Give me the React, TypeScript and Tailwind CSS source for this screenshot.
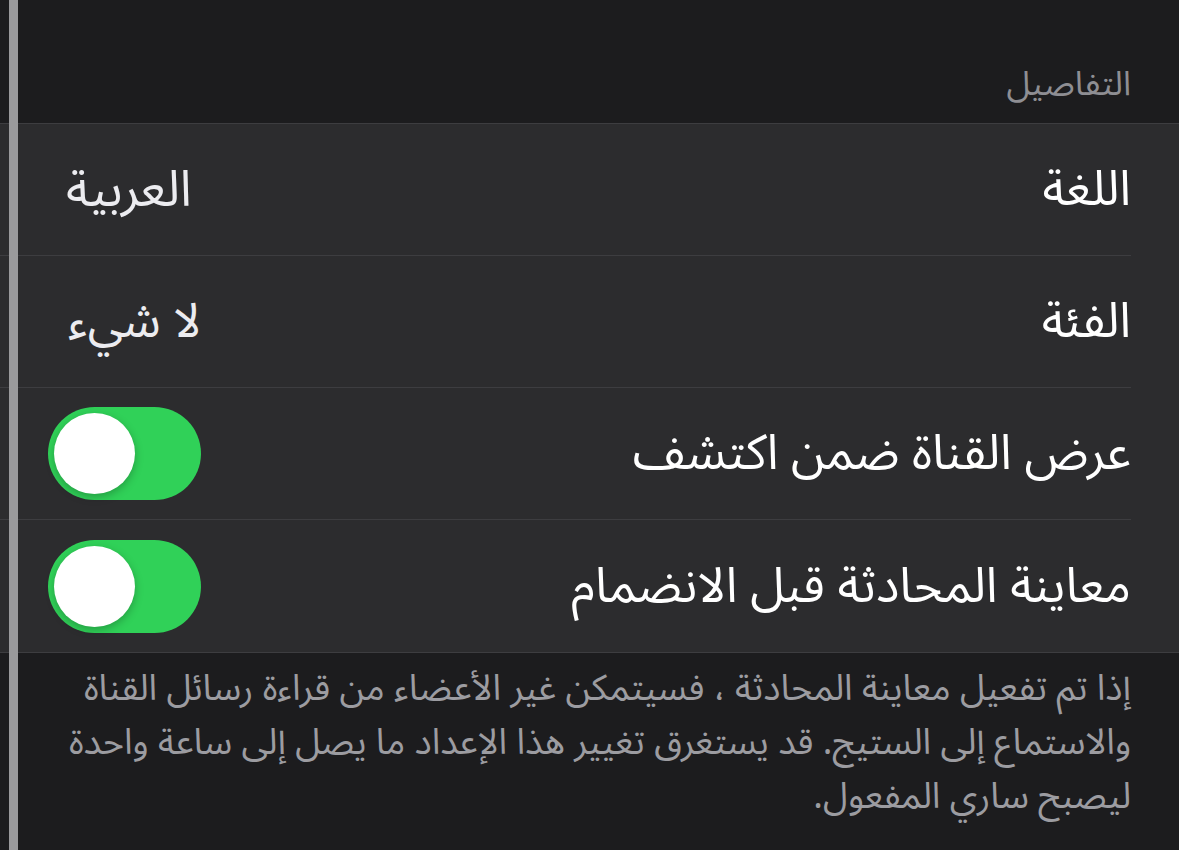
import { useState } from "react";

const font = { fontFamily: '"Noto Sans Arabic", "DejaVu Sans", "Noto Sans", sans-serif' };

function Toggle({ on, onChange }: { on: boolean; onChange: () => void }) {
  return (
    <button
      onClick={onChange}
      className={`relative w-[153px] h-[93px] rounded-full shrink-0 ${on ? "bg-[#30d158]" : "bg-[#39393d]"}`}
    >
      <span
        className={`absolute top-[6px] w-[81px] h-[81px] rounded-full bg-white shadow-[0_3px_8px_rgba(0,0,0,0.25)] ${on ? "left-[6px]" : "right-[6px]"}`}
      />
    </button>
  );
}

function Row({ label, children, last }: { label: string; children: React.ReactNode; last?: boolean }) {
  return (
    <div className="pr-[48px]">
      <div className={`h-[132px] flex items-center justify-between pl-[48px] ${last ? "" : "border-b border-[#3d3d40]"}`}>
        <span className="text-[49px] text-white leading-none">{label}</span>
        {children}
      </div>
    </div>
  );
}

export default function App() {
  const [discover, setDiscover] = useState(true);
  const [preview, setPreview] = useState(true);

  return (
    <div dir="rtl" style={font} className="relative w-[1179px] h-[850px] bg-[#1c1c1e] overflow-hidden">
      <div className="h-[123px] flex items-end pr-[48px] pb-[22px]">
        <span className="text-[34px] text-[#8e8e93] leading-none">التفاصيل</span>
      </div>

      <div className="bg-[#2c2c2e] border-t border-b border-[#3d3d40]">
        <Row label="اللغة">
          <span className="text-[50px] text-[#ececf0] leading-none ml-[18px]">العربية</span>
        </Row>
        <Row label="الفئة">
          <span className="text-[48px] text-[#ececf0] leading-none ml-[20px]">لا شيء</span>
        </Row>
        <Row label="عرض القناة ضمن اكتشف">
          <Toggle on={discover} onChange={() => setDiscover(!discover)} />
        </Row>
        <Row label="معاينة المحادثة قبل الانضمام" last>
          <Toggle on={preview} onChange={() => setPreview(!preview)} />
        </Row>
      </div>

      <p className="pr-[48px] pl-[40px] pt-[9px] text-[36px] leading-[54px] text-[#9c9ca1] whitespace-nowrap">
        إذا تم تفعيل معاينة المحادثة ، فسيتمكن غير الأعضاء من قراءة رسائل القناة
        <br />
        والاستماع إلى الستيج. قد يستغرق تغيير هذا الإعداد ما يصل إلى ساعة واحدة
        <br />
        ليصبح ساري المفعول.
      </p>

      <div className="absolute left-[9px] top-0 w-[9px] h-full bg-[#9a9a9c]" />
    </div>
  );
}
